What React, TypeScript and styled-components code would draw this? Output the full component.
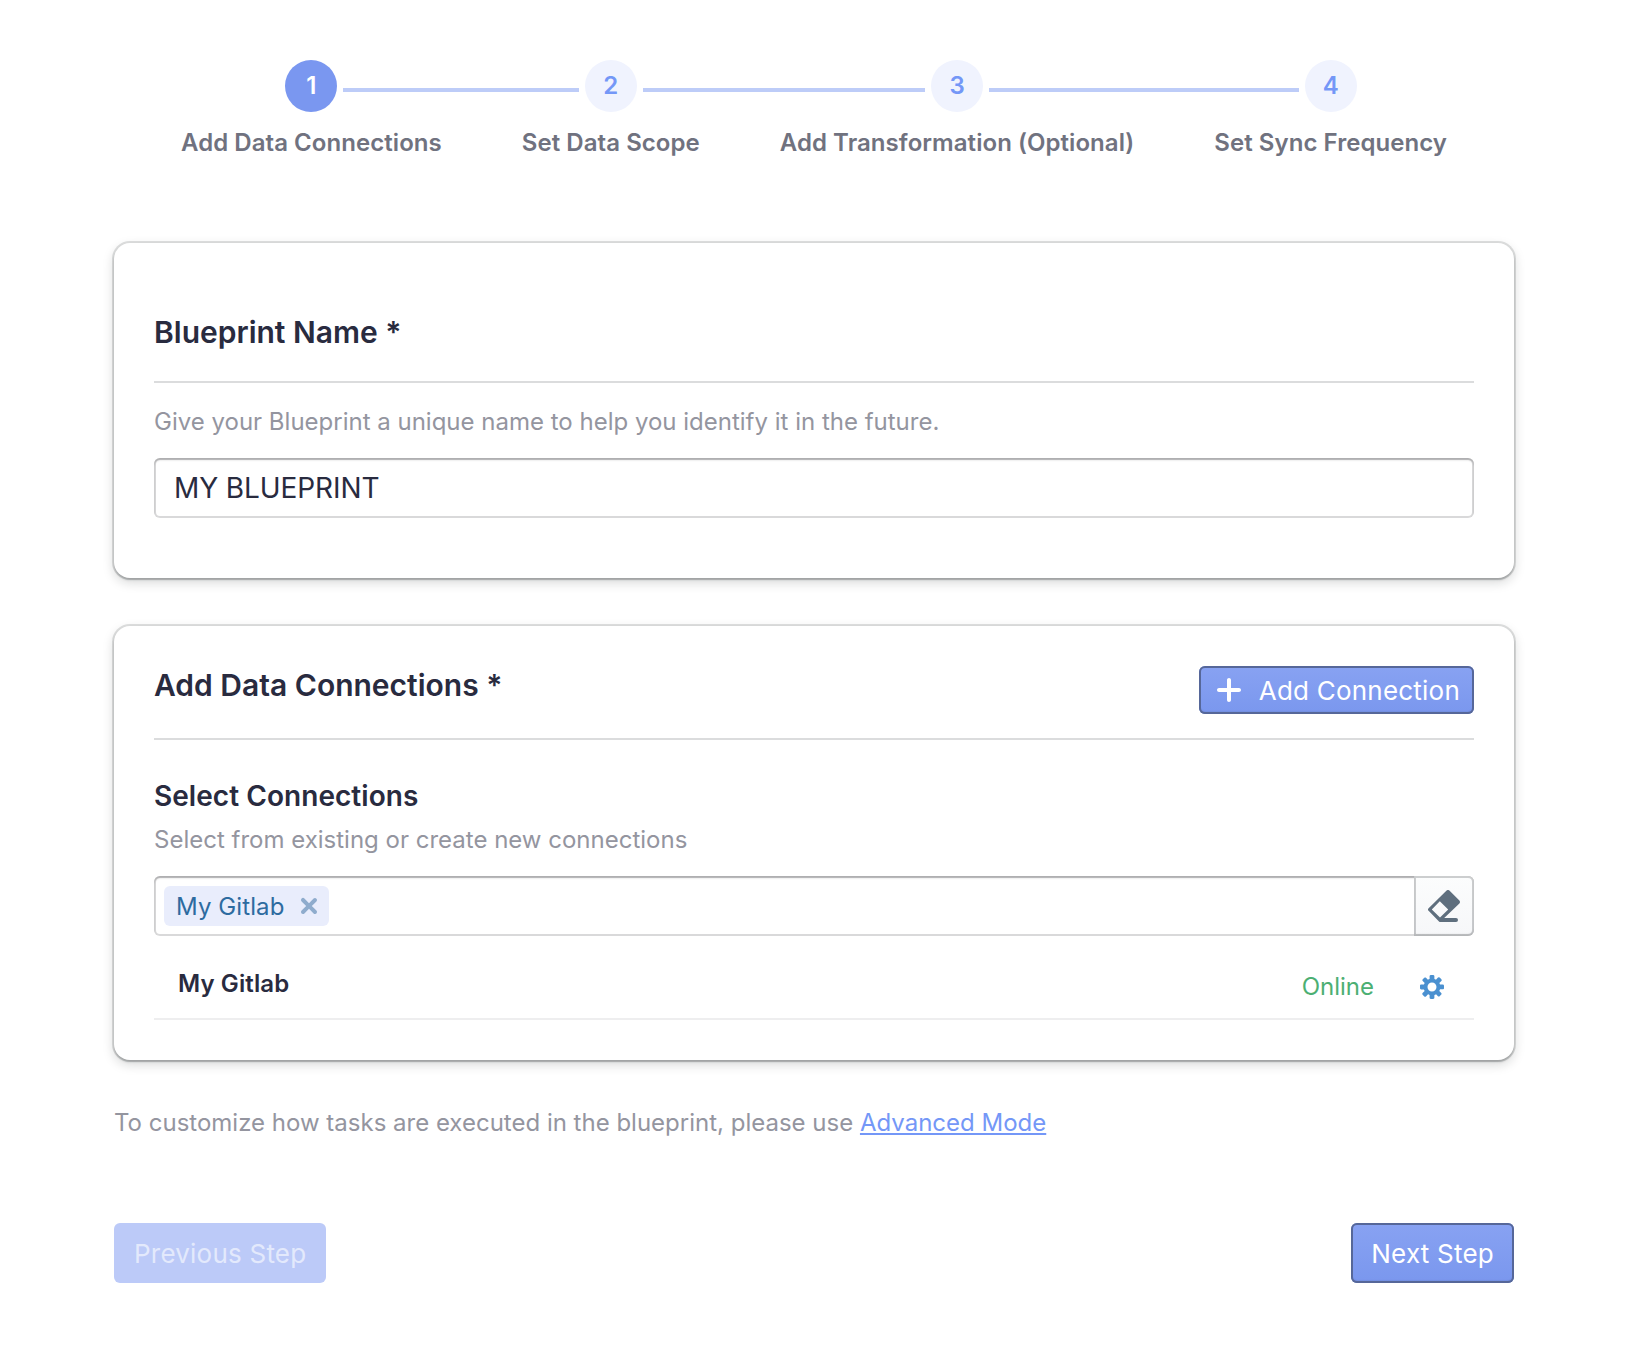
import React from 'react';
import styled, { createGlobalStyle, css } from 'styled-components';

const Global = createGlobalStyle`
  *, *::before, *::after { box-sizing: border-box; }
  body { margin: 0; background: #fff; font-family: Inter, "Liberation Sans", sans-serif; color: #292b3f; letter-spacing: 0; }
  h2, h3, p { margin: 0; }
  button, input { font-family: inherit; margin: 0; }
`;

const Page = styled.main`
  width: 1400px;
  margin-left: 114px;
  padding-top: 60px;
`;

const Steps = styled.ol`
  list-style: none;
  margin: 0;
  padding: 0;
  height: 183px;
  display: flex;
  justify-content: center;
`;

const StepItem = styled.li`
  display: grid;
  grid-template-columns: 1fr 52px 1fr;
  column-gap: 6px;
  align-content: start;
`;

const StepCircle = styled.span<{ $active?: boolean }>`
  width: 52px;
  height: 52px;
  padding-bottom: 2px;
  border-radius: 50%;
  display: grid;
  place-items: center;
  font-size: 24px;
  font-weight: 600;
  background: ${(p) => (p.$active ? '#7a97f0' : '#f0f3fe')};
  color: ${(p) => (p.$active ? '#fff' : '#7497f7')};
`;

const StepLine = styled.span<{ $hidden?: boolean }>`
  height: 4px;
  margin-top: 28px;
  background: ${(p) => (p.$hidden ? 'transparent' : '#bdccf8')};
`;

const StepLabel = styled.span`
  grid-column: 1 / -1;
  padding: 0 40px;
  margin-top: 16px;
  line-height: 30px;
  font-size: 24px;
  font-weight: 600;
  letter-spacing: 0.055px;
  color: #70727f;
  white-space: nowrap;
`;

const Card = styled.section<{ $height: number; $top: number }>`
  height: ${(p) => p.$height}px;
  padding: ${(p) => p.$top}px 40px 0;
  margin-bottom: 48px;
  border-radius: 16px;
  background: #fff;
  box-shadow: 0 0 0 2px rgba(17, 20, 24, 0.13), 0 2px 2px rgba(17, 20, 24, 0.2), 0 4px 12px rgba(17, 20, 24, 0.18);
`;

const CardHead = styled.header<{ $height: number }>`
  height: ${(p) => p.$height}px;
  display: flex;
  justify-content: space-between;
  align-items: flex-start;
  border-bottom: 2px solid #dbdcdd;
`;

const CardTitle = styled.h2<{ $drop?: number }>`
  margin-top: ${(p) => p.$drop ?? 0}px;
  font-size: 30px;
  line-height: 36px;
  font-weight: 600;
`;

const SubTitle = styled.h3`
  margin-top: 38px;
  font-size: 28px;
  line-height: 36px;
  font-weight: 600;
  letter-spacing: 0.05px;
`;

const Hint = styled.p<{ $top: number }>`
  margin-top: ${(p) => p.$top}px;
  font-size: 24px;
  line-height: 30px;
  color: #94959f;
  white-space: nowrap;
`;

const field = css`
  height: 60px;
  border-radius: 6px;
  background: #fff;
  box-shadow: inset 0 0 0 2px rgba(17, 20, 24, 0.16), inset 0 2px 2px rgba(17, 20, 24, 0.22);
`;

const NameInput = styled.input`
  ${field}
  display: block;
  width: 100%;
  margin-top: 21px;
  padding: 0 20px;
  border: 0;
  outline: 0;
  font-size: 28px;
  letter-spacing: -0.1px;
  color: #292b3f;
`;

const TagField = styled.div`
  ${field}
  display: flex;
  align-items: center;
  padding-left: 10px;
  margin-top: 21px;
`;

const Tag = styled.span`
  height: 40px;
  width: 165px;
  display: flex;
  align-items: center;
  justify-content: space-between;
  padding: 0 4px 0 12px;
  border-radius: 6px;
  background: #e9edfc;
  color: #2d6ba0;
  font-size: 24px;
  letter-spacing: 0.1px;
`;

const ClearButton = styled.button`
  width: 60px;
  height: 60px;
  margin-left: auto;
  padding: 0;
  display: grid;
  place-items: center;
  border: 0;
  border-radius: 0 6px 6px 0;
  color: #5f6f7e;
  background: linear-gradient(#fcfdfd, #f6f7f9);
  box-shadow: inset 0 0 0 2px rgba(17, 20, 24, 0.2), inset 0 -2px 2px rgba(17, 20, 24, 0.1);
`;

const Button = styled.button<{ $compact?: boolean }>`
  height: ${(p) => (p.$compact ? 48 : 60)}px;
  padding: ${(p) => (p.$compact ? '0 14px' : '0 20px')};
  display: flex;
  align-items: center;
  gap: 14px;
  border: 0;
  border-radius: 6px;
  font-size: 26px;
  font-weight: 400;
  letter-spacing: 0.22px;
  color: #fff;
  white-space: nowrap;
  background: linear-gradient(#88a2f2, #7a97ee);
  box-shadow: inset 0 0 0 2px #566799, inset 0 -2px 2px rgba(17, 20, 24, 0.2);
  &:disabled {
    background: #bccaf8;
    color: #e3e9fc;
    box-shadow: none;
  }
`;

const Row = styled.div`
  height: 84px;
  padding: 12px 30px 0 24px;
  display: flex;
  align-items: center;
  border-bottom: 2px solid #eeeeef;
`;

const RowName = styled.span`
  flex: 1;
  font-size: 24px;
  font-weight: 600;
  letter-spacing: 0.1px;
`;

const Status = styled.span`
  margin-right: 46px;
  margin-top: 6px;
  font-size: 24px;
  color: #4caf73;
`;

const CogIcon = styled.svg`
  margin-top: 8px;
  fill: #4a90d0;
`;

const Link = styled.a`
  color: #7497f7;
  text-decoration: underline;
  text-decoration-thickness: 2px;
  text-underline-offset: 2px;
`;

const Footer = styled.footer`
  margin-top: 85px;
  display: flex;
  justify-content: space-between;
`;

const steps = ['Add Data Connections', 'Set Data Scope', 'Add Transformation (Optional)', 'Set Sync Frequency'];

export default function App() {
  return (
    <>
      <Global />
      <Page>
        <Steps>
          {steps.map((label, i) => (
            <StepItem key={label}>
              <StepLine $hidden={i === 0} />
              <StepCircle $active={i === 0}>{i + 1}</StepCircle>
              <StepLine $hidden={i === steps.length - 1} />
              <StepLabel>{label}</StepLabel>
            </StepItem>
          ))}
        </Steps>

        <Card $height={335} $top={71}>
          <CardHead $height={69}>
            <CardTitle>Blueprint Name *</CardTitle>
          </CardHead>
          <Hint $top={24}>Give your Blueprint a unique name to help you identify it in the future.</Hint>
          <NameInput defaultValue="MY BLUEPRINT" />
        </Card>

        <Card $height={434} $top={40}>
          <CardHead $height={74}>
            <CardTitle $drop={1}>Add Data Connections *</CardTitle>
            <Button $compact>
              <svg width="32" height="32" viewBox="0 0 16 16" fill="currentColor">
                <path d="M13 7H9V3c0-.55-.45-1-1-1s-1 .45-1 1v4H3c-.55 0-1 .45-1 1s.45 1 1 1h4v4c0 .55.45 1 1 1s1-.45 1-1V9h4c.55 0 1-.45 1-1s-.45-1-1-1z" />
              </svg>
              Add Connection
            </Button>
          </CardHead>
          <SubTitle>Select Connections</SubTitle>
          <Hint $top={11}>Select from existing or create new connections</Hint>
          <TagField>
            <Tag>
              My Gitlab
              <svg width="32" height="32" viewBox="0 0 16 16" fill="#8faccd">
                <path d="M9.41 8l2.29-2.29c.19-.18.3-.43.3-.71a1.003 1.003 0 00-1.71-.71L8 6.59l-2.29-2.3a1.003 1.003 0 00-1.42 1.42L6.59 8 4.3 10.29c-.19.18-.3.43-.3.71a1.003 1.003 0 001.71.71L8 9.41l2.29 2.29c.18.19.43.3.71.3a1.003 1.003 0 00.71-1.71L9.41 8z" />
              </svg>
            </Tag>
            <ClearButton aria-label="Clear">
              <svg width="32" height="32" viewBox="0 0 16 16" fill="currentColor">
                <path d="M8.1 14H14a1 1 0 010 2H6.2c-.3 0-.5-.1-.7-.3L.3 10.4a.9.9 0 010-1.300L9.300.3a1 1 0 011.400 0l5 5c.4.4.4 1 0 1.400L8.100 14zM5.900 5.600L1.900 9.700 6 13.800l4.100-4.100z" fillRule="evenodd" />
              </svg>
            </ClearButton>
          </TagField>
          <Row>
            <RowName>My Gitlab</RowName>
            <Status>Online</Status>
            <CogIcon width="24" height="24" viewBox="0 0 16 16">
              <path d="M15.19 6.39h-1.85c-.11-.37-.27-.71-.45-1.04l1.36-1.36c.31-.31.31-.82 0-1.13l-1.13-1.13a.803.803 0 00-1.13 0l-1.36 1.36c-.33-.17-.67-.33-1.04-.44V.79c0-.44-.36-.8-.8-.8h-1.6c-.44 0-.8.36-.8.8v1.86c-.39.12-.75.28-1.1.47l-1.3-1.3c-.3-.3-.79-.3-1.09 0L1.82 2.91c-.3.3-.3.79 0 1.09l1.3 1.3c-.2.34-.36.7-.48 1.09H.79c-.44 0-.8.36-.8.8v1.6c0 .44.36.8.8.8h1.85c.11.37.27.71.45 1.04l-1.36 1.36c-.31.31-.31.82 0 1.13l1.13 1.13c.31.31.82.31 1.13 0l1.36-1.36c.33.18.67.33 1.04.44v1.86c0 .44.36.8.8.8h1.6c.44 0 .8-.36.8-.8v-1.86c.39-.12.75-.28 1.1-.47l1.3 1.3c.3.3.79.3 1.09 0l1.09-1.09c.3-.3.3-.79 0-1.09l-1.3-1.3c.19-.35.36-.71.48-1.1h1.85c.44 0 .8-.36.8-.8v-1.6a.816.816 0 00-.81-.79zm-7.2 4.6c-1.66 0-3-1.34-3-3s1.34-3 3-3 3 1.34 3 3-1.34 3-3 3z" />
            </CogIcon>
          </Row>
        </Card>

        <Hint $top={0}>
          To customize how tasks are executed in the blueprint, please use <Link>Advanced Mode</Link>
        </Hint>

        <Footer>
          <Button disabled>Previous Step</Button>
          <Button>Next Step</Button>
        </Footer>
      </Page>
    </>
  );
}
